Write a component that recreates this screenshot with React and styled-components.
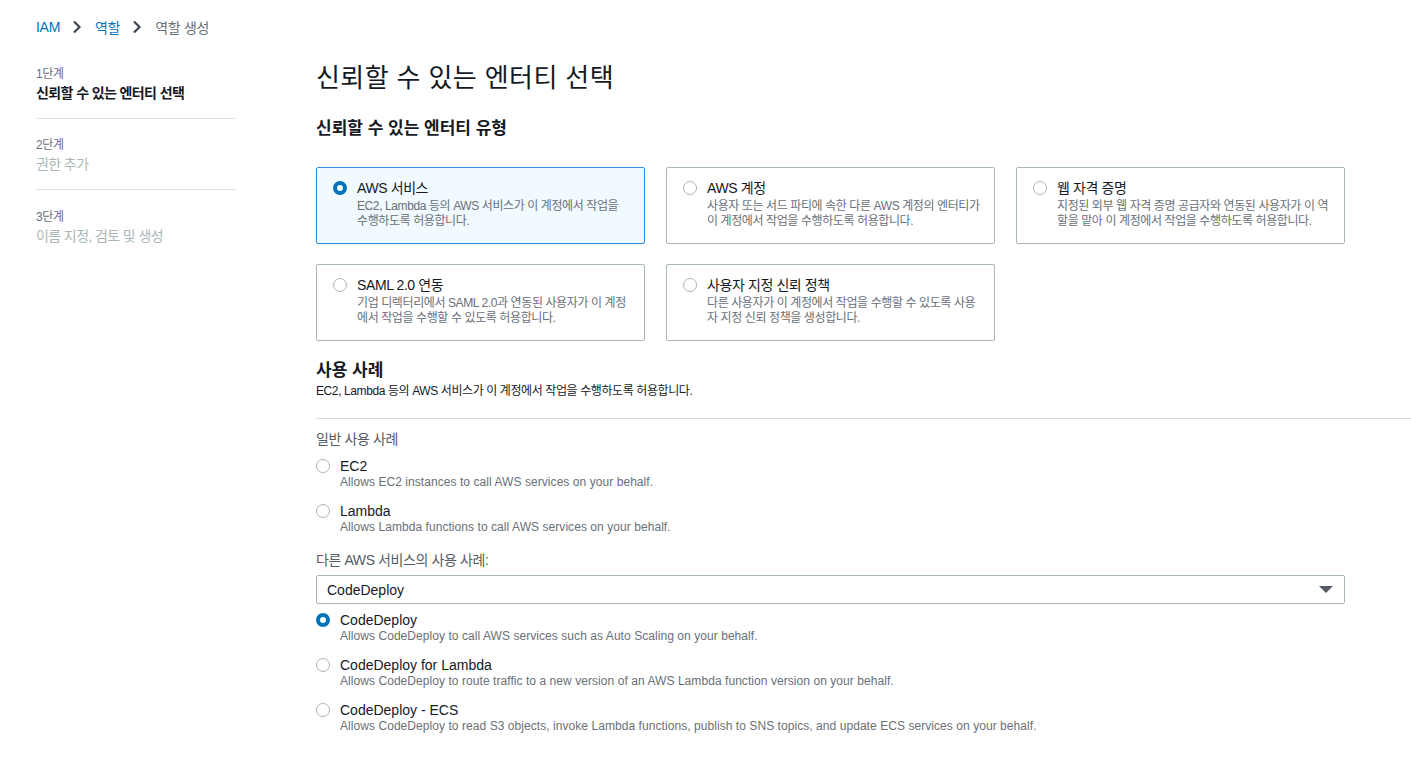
import React from 'react';
import styled, { createGlobalStyle } from 'styled-components';

const GlobalStyle = createGlobalStyle`
  body {
    margin: 0;
    background: #fff;
    font-family: "Liberation Sans", "Noto Sans CJK KR", sans-serif;
    color: #16191f;
  }
`;

const entityTypes = [
  {
    title: 'AWS 서비스',
    desc: 'EC2, Lambda 등의 AWS 서비스가 이 계정에서 작업을 수행하도록 허용합니다.',
    selected: true,
  },
  {
    title: 'AWS 계정',
    desc: '사용자 또는 서드 파티에 속한 다른 AWS 계정의 엔터티가 이 계정에서 작업을 수행하도록 허용합니다.',
  },
  {
    title: '웹 자격 증명',
    desc: '지정된 외부 웹 자격 증명 공급자와 연동된 사용자가 이 역할을 맡아 이 계정에서 작업을 수행하도록 허용합니다.',
  },
  {
    title: 'SAML 2.0 연동',
    desc: '기업 디렉터리에서 SAML 2.0과 연동된 사용자가 이 계정에서 작업을 수행할 수 있도록 허용합니다.',
  },
  {
    title: '사용자 지정 신뢰 정책',
    desc: '다른 사용자가 이 계정에서 작업을 수행할 수 있도록 사용자 지정 신뢰 정책을 생성합니다.',
  },
];

const commonCases = [
  { title: 'EC2', desc: 'Allows EC2 instances to call AWS services on your behalf.' },
  { title: 'Lambda', desc: 'Allows Lambda functions to call AWS services on your behalf.' },
];

const serviceCases = [
  {
    title: 'CodeDeploy',
    desc: 'Allows CodeDeploy to call AWS services such as Auto Scaling on your behalf.',
    selected: true,
  },
  {
    title: 'CodeDeploy for Lambda',
    desc: 'Allows CodeDeploy to route traffic to a new version of an AWS Lambda function version on your behalf.',
  },
  {
    title: 'CodeDeploy - ECS',
    desc: 'Allows CodeDeploy to read S3 objects, invoke Lambda functions, publish to SNS topics, and update ECS services on your behalf.',
  },
];

const steps = [
  { label: '1단계', title: '신뢰할 수 있는 엔터티 선택', active: true },
  { label: '2단계', title: '권한 추가' },
  { label: '3단계', title: '이름 지정, 검토 및 생성' },
];

function Chevron() {
  return (
    <svg width="10" height="14" viewBox="0 0 10 14">
      <polyline points="2,1.5 7.5,7 2,12.5" fill="none" stroke="#414750" strokeWidth="2.2" />
    </svg>
  );
}

export default function App() {
  return (
    <>
      <GlobalStyle />
      <Page>
        <Breadcrumb>
          <Crumb href="#">IAM</Crumb>
          <Chevron />
          <Crumb href="#">역할</Crumb>
          <Chevron />
          <Current>역할 생성</Current>
        </Breadcrumb>

        <Layout>
          <Sidebar>
            {steps.map((s) => (
              <Step key={s.label}>
                <StepLabel>{s.label}</StepLabel>
                <StepTitle $active={s.active}>{s.title}</StepTitle>
              </Step>
            ))}
          </Sidebar>

          <Main>
            <PageTitle>신뢰할 수 있는 엔터티 선택</PageTitle>
            <SectionTitle>신뢰할 수 있는 엔터티 유형</SectionTitle>

            <TileGrid>
              {entityTypes.map((t) => (
                <Tile key={t.title} $selected={t.selected}>
                  <Radio $checked={t.selected} />
                  <TileBody>
                    <TileTitle>{t.title}</TileTitle>
                    <TileDesc>{t.desc}</TileDesc>
                  </TileBody>
                </Tile>
              ))}
            </TileGrid>

            <UseCaseHeader>
              <SectionTitle as="h3">사용 사례</SectionTitle>
              <UseCaseDesc>EC2, Lambda 등의 AWS 서비스가 이 계정에서 작업을 수행하도록 허용합니다.</UseCaseDesc>
            </UseCaseHeader>
            <Divider />

            <GroupLabel>일반 사용 사례</GroupLabel>
            <OptionList>
              {commonCases.map((o) => (
                <Option key={o.title}>
                  <Radio $checked={o.selected} />
                  <div>
                    <OptionTitle>{o.title}</OptionTitle>
                    <OptionDesc>{o.desc}</OptionDesc>
                  </div>
                </Option>
              ))}
            </OptionList>

            <GroupLabel $top={15}>다른 AWS 서비스의 사용 사례:</GroupLabel>
            <Select>
              <span>CodeDeploy</span>
              <Caret />
            </Select>
            <OptionList $top={6}>
              {serviceCases.map((o) => (
                <Option key={o.title}>
                  <Radio $checked={o.selected} />
                  <div>
                    <OptionTitle>{o.title}</OptionTitle>
                    <OptionDesc>{o.desc}</OptionDesc>
                  </div>
                </Option>
              ))}
            </OptionList>
          </Main>
        </Layout>
      </Page>
    </>
  );
}

const Page = styled.div`
  padding: 17px 0 30px 36px;
`;

const Breadcrumb = styled.nav`
  display: flex;
  align-items: center;
  gap: 9px;
  height: 20px;
  font-size: 14px;
  letter-spacing: -0.3px;

  svg {
    margin: 0 4px 0 3px;
  }
`;

const Crumb = styled.a`
  color: #0073bb;
  text-decoration: none;
`;

const Current = styled.span`
  color: #687078;
`;

const Layout = styled.div`
  display: flex;
  align-items: flex-start;
  gap: 80px;
  margin-top: 23px;
`;

const Sidebar = styled.ol`
  list-style: none;
  margin: 0;
  padding: 6px 0 0;
  width: 200px;
  flex-shrink: 0;
`;

const Step = styled.li`
  padding: 18px 0 15px;
  border-bottom: 1px solid #dfe2e2;

  &:first-child {
    padding-top: 0;
  }
  &:last-child {
    border-bottom: none;
    padding-top: 19px;
  }
`;

const StepLabel = styled.div`
  font-size: 12px;
  line-height: 16px;
  color: #687078;
  letter-spacing: -0.4px;
`;

const StepTitle = styled.div`
  margin-top: 1px;
  font-size: 14px;
  line-height: 20px;
  letter-spacing: -0.6px;
  font-weight: ${(p) => (p.$active ? 700 : 400)};
  color: ${(p) => (p.$active ? '#16191f' : '#aab7b8')};
`;

const Main = styled.main`
  flex: 1;
  padding-right: 66px;
`;

const PageTitle = styled.h1`
  margin: 0;
  font-size: 26px;
  line-height: 36px;
  font-weight: 400;
  letter-spacing: 0.4px;
  color: #16191f;
`;

const SectionTitle = styled.h2`
  margin: 21px 0 0;
  font-size: 17px;
  line-height: 24px;
  font-weight: 700;
  letter-spacing: 0;
  color: #16191f;
`;

const TileGrid = styled.div`
  display: grid;
  grid-template-columns: repeat(3, 1fr);
  gap: 20px 21px;
  margin-top: 26px;
`;

const Tile = styled.div`
  display: flex;
  align-items: flex-start;
  gap: 10px;
  box-sizing: border-box;
  height: 77px;
  padding: 13px 13px 0 16px;
  border: 1px solid ${(p) => (p.$selected ? '#348ede' : '#aab7b8')};
  border-radius: 2px;
  background: ${(p) => (p.$selected ? '#f1faff' : '#fff')};
`;

const TileBody = styled.div`
  margin-top: -3px;
`;

const TileTitle = styled.div`
  font-size: 14px;
  line-height: 20px;
  letter-spacing: -0.4px;
  color: #16191f;
`;

const TileDesc = styled.div`
  margin-top: 1px;
  font-size: 12px;
  line-height: 15px;
  letter-spacing: -0.4px;
  color: #687078;
`;

const Radio = styled.span`
  flex-shrink: 0;
  box-sizing: border-box;
  width: 14px;
  height: 14px;
  border-radius: 50%;
  background: #fff;
  border: ${(p) => (p.$checked ? '4px solid #0073bb' : '1px solid #aab7b8')};
`;

const UseCaseHeader = styled.div`
  margin-top: 18px;

  h3 {
    margin: 0;
  }
`;

const UseCaseDesc = styled.p`
  margin: 0;
  font-size: 12px;
  line-height: 16px;
  letter-spacing: -0.4px;
  color: #16191f;
`;

const Divider = styled.hr`
  margin: 19px -66px 0 0;
  border: none;
  border-top: 1px solid #d5dbdb;
`;

const GroupLabel = styled.div`
  margin-top: ${(p) => p.$top ?? 10}px;
  font-size: 14px;
  line-height: 20px;
  letter-spacing: -0.4px;
  color: #545b64;
`;

const OptionList = styled.div`
  display: flex;
  flex-direction: column;
  gap: 11px;
  margin-top: ${(p) => p.$top ?? 7}px;
`;

const Option = styled.label`
  display: flex;
  align-items: flex-start;
  gap: 10px;

  ${Radio} {
    margin-top: 3px;
  }
`;

const OptionTitle = styled.div`
  font-size: 14px;
  line-height: 20px;
  color: #16191f;
`;

const OptionDesc = styled.div`
  margin-top: -2px;
  font-size: 12px;
  line-height: 16px;
  letter-spacing: 0.06px;
  color: #687078;
`;

const Select = styled.div`
  display: flex;
  align-items: center;
  justify-content: space-between;
  box-sizing: border-box;
  height: 29px;
  margin-top: 5px;
  padding: 0 11px 0 10px;
  border: 1px solid #aab7b8;
  border-radius: 2px;
  font-size: 14px;
  color: #16191f;
`;

const Caret = styled.span`
  width: 0;
  height: 0;
  border-left: 7px solid transparent;
  border-right: 7px solid transparent;
  border-top: 7px solid #545b64;
`;
